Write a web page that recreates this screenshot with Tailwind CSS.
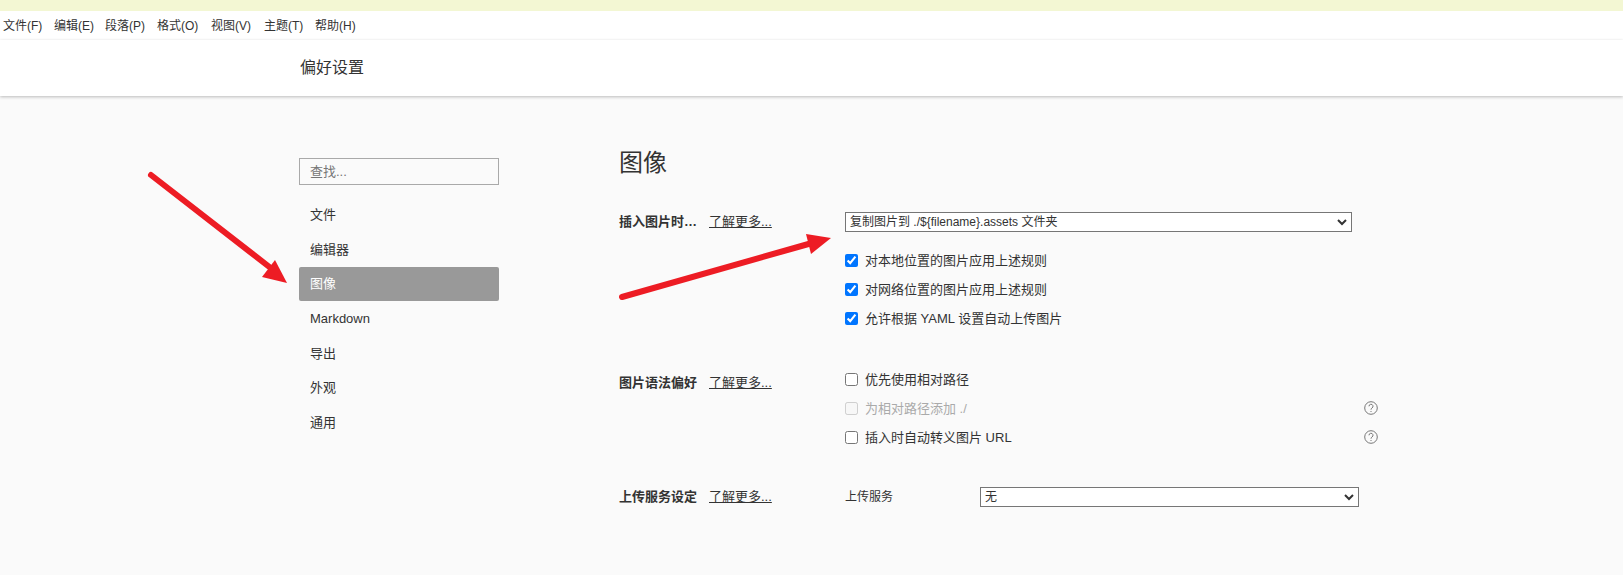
<!DOCTYPE html>
<html lang="zh-CN">
<head>
  <meta charset="UTF-8" />
  <title>偏好设置</title>
  <script src="https://cdn.jsdelivr.net/npm/@tailwindcss/browser@4"></script>
</head>
<body class="relative h-[575px] w-[1623px] overflow-hidden bg-[#fafafa] font-['Liberation_Sans','Noto_Sans_CJK_SC',sans-serif] text-[13px] text-[#333]">

  <!-- Window title strip -->
  <div class="h-[11px] bg-[#f3f7d3]"></div>

  <!-- Menu bar -->
  <div class="h-[29px] bg-white">
    <div class="flex h-[29px] items-center pl-[3px] text-xs text-[#333]">
      <span class="w-[51px]">文件(F)</span>
      <span class="w-[51px]">编辑(E)</span>
      <span class="w-[52px]">段落(P)</span>
      <span class="w-[54px]">格式(O)</span>
      <span class="w-[53px]">视图(V)</span>
      <span class="w-[51px]">主题(T)</span>
      <span>帮助(H)</span>
    </div>
  </div>

  <!-- Preferences title -->
  <div class="h-[56px] bg-white pl-[300px] pt-[17px] text-base leading-[22px] shadow-[0_1px_3px_rgba(0,0,0,0.25)]">偏好设置</div>

  <div class="flex pl-[299px] pt-[62px]">
    <!-- Sidebar -->
    <div class="w-[200px]">
      <div class="flex h-[27px] items-center border border-[#a9a9a9] bg-[#fafafa] pl-[10px] text-[#757575]">查找...</div>
      <div class="mt-[12px] flex flex-col">
        <div class="flex h-[35px] items-center pl-[11px]">文件</div>
        <div class="flex h-[35px] items-center pl-[11px]">编辑器</div>
        <div class="flex h-[34px] items-center rounded-[2px] bg-[#999] pl-[11px] text-white">图像</div>
        <div class="flex h-[35px] items-center pl-[11px]">Markdown</div>
        <div class="flex h-[35px] items-center pl-[11px]">导出</div>
        <div class="flex h-[34px] items-center pl-[11px]">外观</div>
        <div class="flex h-[35px] items-center pl-[11px]">通用</div>
      </div>
    </div>

    <!-- Image settings -->
    <div class="ml-[120px] w-[760px] -mt-[11px]">
      <h1 class="text-2xl leading-[32px]">图像</h1>

      <div class="mt-[33px] flex">
        <div class="flex w-[226px] font-['Liberation_Sans','Noto_Sans_CJK_SC',sans-serif]">
          <span class="w-[90px] font-bold">插入图片时…</span>
          <a class="underline">了解更多...</a>
        </div>
        <div class="w-[507px]">
          <div class="flex h-5 w-[507px] items-center justify-between border border-[#767676] bg-white pl-1 pr-[4px] text-xs">
            <span>复制图片到 ./${filename}.assets 文件夹</span>
            <svg class="h-[10px] w-[10px]" viewBox="0 0 10 10"><path d="M1 3l4 4 4-4" fill="none" stroke="#333" stroke-width="2"/></svg>
          </div>
          <div class="mt-[22px] flex h-[13px] items-center gap-[7px]">
            <input type="checkbox" checked class="h-[13px] w-[13px] accent-[#0075ff]" /><span>对本地位置的图片应用上述规则</span>
          </div>
          <div class="mt-[16px] flex h-[13px] items-center gap-[7px]">
            <input type="checkbox" checked class="h-[13px] w-[13px] accent-[#0075ff]" /><span>对网络位置的图片应用上述规则</span>
          </div>
          <div class="mt-[16px] flex h-[13px] items-center gap-[7px]">
            <input type="checkbox" checked class="h-[13px] w-[13px] accent-[#0075ff]" /><span>允许根据 YAML 设置自动上传图片</span>
          </div>
        </div>
      </div>

      <div class="mt-[48px] flex">
        <div class="flex w-[226px]">
          <span class="w-[90px] font-bold">图片语法偏好</span>
          <a class="underline">了解更多...</a>
        </div>
        <div class="w-[533px]">
          <div class="flex h-[13px] items-center gap-[7px]">
            <input type="checkbox" class="h-[13px] w-[13px]" /><span>优先使用相对路径</span>
          </div>
          <div class="relative mt-[16px] flex h-[13px] items-center gap-[7px] text-[#aaa]">
            <input type="checkbox" disabled class="h-[13px] w-[13px]" /><span>为相对路径添加 ./</span>
            <svg class="absolute left-[519px] top-[-1px] h-[14px] w-[14px]" viewBox="0 0 14 14" fill="none" stroke="#777"><circle cx="7" cy="7" r="6.3"/><path d="M5 5.3a2 2 0 1 1 3 1.7c-.7.5-1 .9-1 1.7"/><path d="M7 10v1"/></svg>
          </div>
          <div class="relative mt-[16px] flex h-[13px] items-center gap-[7px]">
            <input type="checkbox" class="h-[13px] w-[13px]" /><span>插入时自动转义图片 URL</span>
            <svg class="absolute left-[519px] top-[-1px] h-[14px] w-[14px]" viewBox="0 0 14 14" fill="none" stroke="#777"><circle cx="7" cy="7" r="6.3"/><path d="M5 5.3a2 2 0 1 1 3 1.7c-.7.5-1 .9-1 1.7"/><path d="M7 10v1"/></svg>
          </div>
        </div>
      </div>

      <div class="mt-[43px] flex">
        <div class="flex w-[226px]">
          <span class="w-[90px] font-bold">上传服务设定</span>
          <a class="underline">了解更多...</a>
        </div>
        <div class="flex w-[514px] items-center">
          <span class="w-[135px] text-xs">上传服务</span>
          <div class="flex h-5 w-[379px] items-center justify-between border border-[#767676] bg-white pl-1 pr-[4px] text-xs">
            <span>无</span>
            <svg class="h-[10px] w-[10px]" viewBox="0 0 10 10"><path d="M1 3l4 4 4-4" fill="none" stroke="#333" stroke-width="2"/></svg>
          </div>
        </div>
      </div>
    </div>
  </div>

  <!-- Red annotation arrows -->
  <svg class="absolute left-0 top-0 h-[575px] w-[1623px]" viewBox="0 0 1623 575" fill="#ed1c24">
    <path d="M151 175L272 269" stroke="#ed1c24" stroke-width="6" stroke-linecap="round"/>
    <path d="M287 283L262 277L275 260Z"/>
    <path d="M622 297L812 243" stroke="#ed1c24" stroke-width="6" stroke-linecap="round"/>
    <path d="M831 238L806 234L811 254Z"/>
  </svg>
</body>
</html>
